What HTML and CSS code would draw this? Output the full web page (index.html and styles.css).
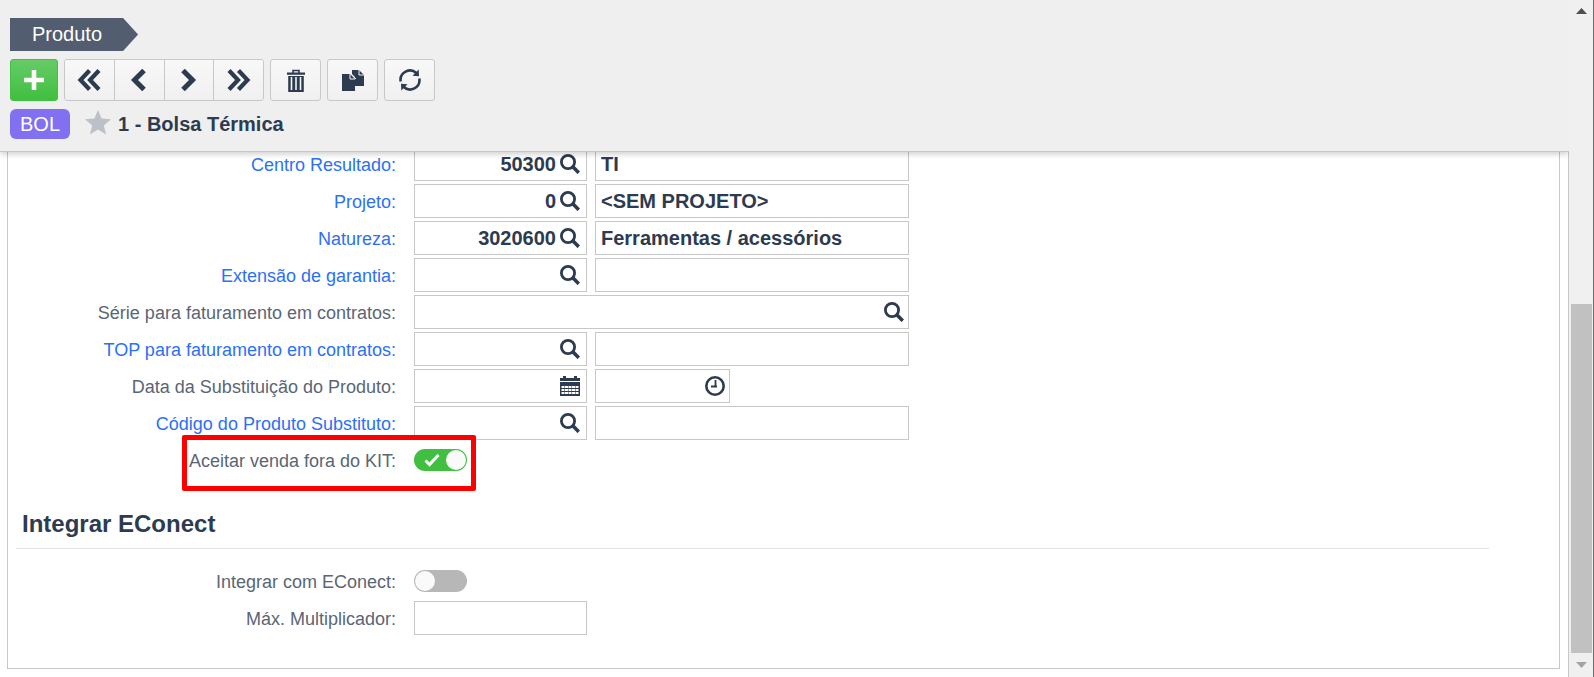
FILE: index.html
```html
<!DOCTYPE html>
<html lang="pt-BR">
<head>
<meta charset="utf-8">
<title>Produto</title>
<link rel="stylesheet" href="styles.css">
</head>
<body>
<svg class="defs" aria-hidden="true">
  <symbol id="search" viewBox="0 0 20 20">
    <circle cx="8" cy="8" r="6.600" fill="none" stroke="currentColor" stroke-width="2.800"/>
    <path d="M12.300 12.300L18.800 18.800" stroke="currentColor" stroke-width="3.600"/>
  </symbol>
  <symbol id="calendar" viewBox="0 0 20 20">
    <path d="M0 2h3V0h3v2h8V0h3v2h3v3H0zM0 6h20v14H0z" fill="currentColor"/>
    <path d="M1.500 10h3v2h-3zM5 10h3v2H5zM8.500 10h3v2h-3zM12 10h3v2h-3zM15.500 10h3v2h-3zM1.500 13h3v2h-3zM5 13h3v2H5zM8.500 13h3v2h-3zM12 13h3v2h-3zM15.500 13h3v2h-3zM1.500 16h3v2h-3zM5 16h3v2H5zM8.500 16h3v2h-3zM12 16h3v2h-3zM15.500 16h3v2h-3z" fill="#fff"/>
  </symbol>
  <symbol id="clock" viewBox="0 0 20 20">
    <circle cx="10" cy="10" r="8.700" fill="none" stroke="currentColor" stroke-width="2.600"/>
    <path d="M10.500 4v7M6 10.500h6" fill="none" stroke="currentColor" stroke-width="1.800"/>
  </symbol>
</svg>

<div class="app">
  <div class="main">
    <header class="header">
      <div class="crumb">Produto</div>
      <div class="toolbar">
        <button class="btn add" aria-label="Adicionar"><svg width="22" height="22" viewBox="0 0 22 22"><path d="M11 1v20M1 11h20" stroke="#fff" stroke-width="4.600"/></svg></button>
        <div class="group">
          <button class="btn" aria-label="Primeiro"><svg width="24" height="22" viewBox="0 0 24 22"><path d="M12.500 1.500L3.500 11l9 9.500M22 1.500L13 11l9 9.500" fill="none" stroke="currentColor" stroke-width="4.200"/></svg></button>
          <button class="btn" aria-label="Anterior"><svg width="24" height="22" viewBox="0 0 24 22"><path d="M17 1.500L7.500 11l9.500 9.500" fill="none" stroke="currentColor" stroke-width="5"/></svg></button>
          <button class="btn" aria-label="Próximo"><svg width="24" height="22" viewBox="0 0 24 22"><path d="M6 1.500L15.500 11L6 20.500" fill="none" stroke="currentColor" stroke-width="5"/></svg></button>
          <button class="btn" aria-label="Último"><svg width="24" height="22" viewBox="0 0 24 22"><path d="M2 1.500L11 11l-9 9.500M11.500 1.500L20.500 11l-9 9.500" fill="none" stroke="currentColor" stroke-width="4.200"/></svg></button>
        </div>
        <button class="btn" aria-label="Excluir"><svg width="18" height="23" viewBox="0 0 18 23"><path d="M6 4V1.500h6V4" fill="none" stroke="currentColor" stroke-width="1.600"/><path d="M0 3.500h18v2.300H0zM1.200 7h15.600v16H1.200z" fill="currentColor"/><path d="M4.500 8v13M9 8v13M13.500 8v13" stroke="#f5f5f5" stroke-width="1.600"/></svg></button>
        <button class="btn" aria-label="Duplicar"><svg width="22" height="21" viewBox="0 0 22 21"><path d="M10 0h7l5 5v11h-9V7l-3-3z" fill="currentColor"/><path d="M17 0v5h5" fill="none" stroke="#f5f5f5" stroke-width="1"/><path d="M0 4h8l5 5v12H0z" fill="currentColor"/><path d="M8 4v5h5M9 4l5 5" fill="none" stroke="#f5f5f5" stroke-width="1"/></svg></button>
        <button class="btn" aria-label="Atualizar"><svg width="22" height="22" viewBox="0 0 22 22"><path d="M1.700 12.500A9.400 9.400 0 0 1 17.500 4.200M20.300 9.500A9.400 9.400 0 0 1 4.500 17.800" fill="none" stroke="currentColor" stroke-width="2.600"/><path d="M19.700.600l.300 6.700-6.500-.600zM2.300 21.400L2 14.700l6.500.600z" fill="currentColor"/></svg></button>
      </div>
      <div class="record">
        <span class="badge">BOL</span>
        <svg class="star" width="26" height="25" viewBox="0 0 26 25"><path d="M13 0l3.600 8.600 9.400.700-7.200 6.100L21.100 24.500 13 19.600 4.900 24.500l2.300-9.100L0 9.300l9.400-.700z" fill="#bcc0c8"/></svg>
        <h1 class="title">1 - Bolsa Térmica</h1>
      </div>
    </header>

    <main class="content">
      <form class="panel">
        <div class="rows clipped">
          <div class="row">
            <label class="link" for="centro">Centro Resultado:</label>
            <div class="field code"><input id="centro" value="50300"><button type="button" aria-label="Pesquisar"><svg><use href="#search"/></svg></button></div>
            <div class="field desc"><input aria-label="Descrição do centro" value="TI"></div>
          </div>
          <div class="row">
            <label class="link" for="projeto">Projeto:</label>
            <div class="field code"><input id="projeto" value="0"><button type="button" aria-label="Pesquisar"><svg><use href="#search"/></svg></button></div>
            <div class="field desc"><input aria-label="Descrição do projeto" value="&lt;SEM PROJETO&gt;"></div>
          </div>
          <div class="row">
            <label class="link" for="natureza">Natureza:</label>
            <div class="field code"><input id="natureza" value="3020600"><button type="button" aria-label="Pesquisar"><svg><use href="#search"/></svg></button></div>
            <div class="field desc"><input aria-label="Descrição da natureza" value="Ferramentas / acessórios"></div>
          </div>
          <div class="row">
            <label class="link" for="garantia">Extensão de garantia:</label>
            <div class="field code"><input id="garantia"><button type="button" aria-label="Pesquisar"><svg><use href="#search"/></svg></button></div>
            <div class="field desc"><input aria-label="Descrição da garantia"></div>
          </div>
          <div class="row">
            <label for="serie">Série para faturamento em contratos:</label>
            <div class="field wide"><input id="serie"><button type="button" aria-label="Pesquisar"><svg><use href="#search"/></svg></button></div>
          </div>
          <div class="row">
            <label class="link" for="top">TOP para faturamento em contratos:</label>
            <div class="field code"><input id="top"><button type="button" aria-label="Pesquisar"><svg><use href="#search"/></svg></button></div>
            <div class="field desc"><input aria-label="Descrição da TOP"></div>
          </div>
          <div class="row">
            <label for="data">Data da Substituição do Produto:</label>
            <div class="field code"><input id="data"><button type="button" aria-label="Calendário"><svg><use href="#calendar"/></svg></button></div>
            <div class="field time"><input aria-label="Hora"><button type="button" aria-label="Hora"><svg><use href="#clock"/></svg></button></div>
          </div>
          <div class="row">
            <label class="link" for="substituto">Código do Produto Substituto:</label>
            <div class="field code"><input id="substituto"><button type="button" aria-label="Pesquisar"><svg><use href="#search"/></svg></button></div>
            <div class="field desc"><input aria-label="Descrição do substituto"></div>
          </div>
          <div class="row highlighted">
            <label for="kit">Aceitar venda fora do KIT:</label>
            <span class="toggle"><input id="kit" type="checkbox" role="switch" checked><svg width="16" height="14" viewBox="0 0 16 14"><path d="M1.500 7.500l4 4L14.500 2" fill="none" stroke="#fff" stroke-width="3"/></svg></span>
          </div>
        </div>

        <h2 class="section">Integrar EConect</h2>

        <div class="rows">
          <div class="row">
            <label for="econect">Integrar com EConect:</label>
            <span class="toggle"><input id="econect" type="checkbox" role="switch"></span>
          </div>
          <div class="row">
            <label for="max">Máx. Multiplicador:</label>
            <div class="field code"><input id="max"></div>
          </div>
        </div>
      </form>
    </main>
  </div>

  <div class="scrollbar" aria-hidden="true">
    <svg class="arrow" viewBox="0 0 11 6"><path d="M0 6L5.500 0 11 6z" fill="#505050"/></svg>
    <div class="track"><div class="thumb"></div></div>
    <svg class="arrow" viewBox="0 0 11 6"><path d="M0 0h11L5.500 6z" fill="#a3a3a3"/></svg>
  </div>
</div>
</body>
</html>
```

FILE: styles.css
```css
*, *::before, *::after { box-sizing: border-box; }

body {
  margin: 0;
  background: #fff;
  color: #2d3b50;
  font-family: "Liberation Sans", Arial, sans-serif;
  font-size: 18px;
}

input, button { font: inherit; color: inherit; }

.defs { display: none; }

.app {
  display: flex;
  height: 100vh;
  overflow: hidden;
}

.main {
  flex: 1;
  min-width: 0;
  display: flex;
  flex-direction: column;
}

/* Header */
.header {
  position: relative;
  z-index: 1;
  display: flex;
  flex-direction: column;
  align-items: flex-start;
  gap: 8px;
  padding: 18px 10px 12px;
  background: #efefef;
  border-bottom: 1px solid #c8c8c8;
  box-shadow: 0 2px 6px rgba(0, 0, 0, 0.2);
}

.crumb {
  padding: 0 36px 0 22px;
  font-size: 20px;
  line-height: 33px;
  color: #fff;
  background: #525d70;
  clip-path: polygon(0 0, calc(100% - 15px) 0, 100% 50%, calc(100% - 15px) 100%, 0 100%);
}

.toolbar { display: flex; gap: 6px; }

.btn {
  display: flex;
  align-items: center;
  justify-content: center;
  width: 51px;
  height: 42px;
  padding: 0;
  border: 1px solid #c8c8c8;
  border-radius: 3px;
  background: linear-gradient(#f8f8f8, #f0f0f0);
}

.add {
  width: 48px;
  border-color: #43bf43;
  background: linear-gradient(#66cb66, #40bf40);
}

.group {
  display: flex;
  width: 200px;
  border: 1px solid #c8c8c8;
  border-radius: 3px;
  overflow: hidden;
}

.group .btn {
  flex: 1;
  height: 40px;
  border-width: 0 1px 0 0;
  border-radius: 0;
}

.group .btn:last-child { border-right: 0; }

.record { display: flex; align-items: center; }

.badge {
  padding: 0 10px;
  border-radius: 6px;
  font-size: 20px;
  line-height: 30px;
  color: #fff;
  background: #8170f0;
}

.star { margin: 0 7px 4px 15px; }

.title { margin: 0; font-size: 20px; line-height: 30px; }

/* Form */
.content {
  flex: 1;
  min-height: 0;
  display: flex;
  border-right: 1px solid #c8c8c8;
}

.panel {
  flex: 1;
  margin: 0 8px 8px 7px;
  border: 1px solid #c8c8c8;
  border-top: 0;
}

.rows { display: flex; flex-direction: column; gap: 3px; }

/* The first row is partly scrolled under the header. */
.clipped { margin-top: -5px; }

.row {
  position: relative;
  display: flex;
  align-items: center;
  gap: 8px;
  height: 34px;
}

.row > label {
  width: 388px;
  margin-right: 10px;
  padding-top: 2px;
  text-align: right;
  color: #5a6675;
}

.row > .link { color: #2b70f8; }

.field {
  display: flex;
  align-items: center;
  height: 34px;
  padding: 0 6px 0 5px;
  border: 1px solid #c8c8c8;
  background: #fff;
}

.code { width: 173px; }
.desc { width: 314px; }
.wide { width: 495px; padding-right: 4px; }
.time { width: 135px; padding-right: 4px; }

.field input {
  flex: 1;
  min-width: 0;
  padding: 0;
  border: 0;
  outline: 0;
  background: none;
  font-size: 20px;
  font-weight: bold;
}

.code input { text-align: right; }

.field button {
  display: flex;
  margin-left: 4px;
  padding: 0;
  border: 0;
  background: none;
}

.field svg { width: 20px; height: 20px; }

.toggle { display: grid; align-items: center; }

.toggle > * { grid-area: 1 / 1; }

.toggle svg { margin-left: 10px; pointer-events: none; }

.toggle input {
  appearance: none;
  display: flex;
  width: 53px;
  height: 22px;
  margin: 0;
  padding: 1px;
  border-radius: 11px;
  background: #b7b7b7;
}

.toggle input::before {
  content: "";
  width: 20px;
  height: 20px;
  border-radius: 50%;
  background: #fafafa;
}

.toggle input:checked { justify-content: flex-end; background: #40bf40; }

.highlighted::after {
  content: "";
  position: absolute;
  top: -8px;
  left: 174px;
  width: 294px;
  height: 56px;
  border: 5px solid #f00;
  border-radius: 2px;
  pointer-events: none;
}

.section {
  margin: 32px 70px 15px 8px;
  padding: 0 6px 9px;
  border-bottom: 1px solid #e2e2e2;
  font-size: 24px;
  line-height: 30px;
}

/* Scrollbar */
.scrollbar {
  position: relative;
  z-index: 2;
  display: flex;
  flex-direction: column;
  align-items: center;
  width: 25px;
  padding: 8px 1px 9px 2px;
  background: #f0f0f0;
  border-right: 1px solid #6b6b6b;
}

.arrow { width: 11px; height: 6px; }

.track {
  flex: 1;
  align-self: stretch;
  display: flex;
  flex-direction: column;
  justify-content: flex-end;
  margin: 9px 0;
}

.thumb { height: 55.4%; background: #c1c1c1; }
```
